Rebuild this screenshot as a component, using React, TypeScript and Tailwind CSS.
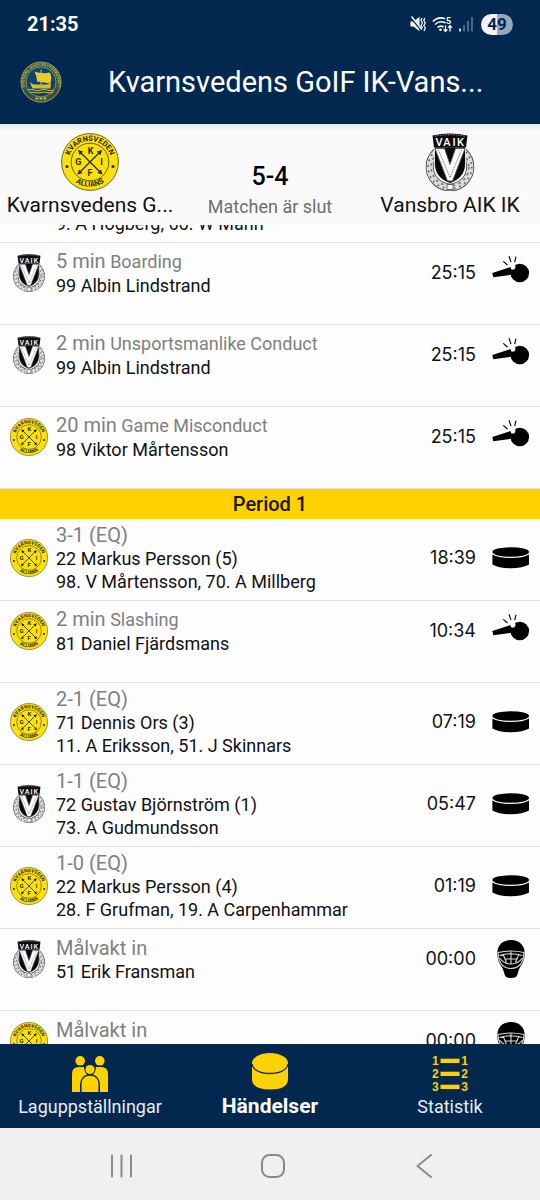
import { useId } from "react"

type Team = "kgif" | "vaik"
type EventKind = "penalty" | "goal" | "goalie"

type GameEvent = {
    team: Team
    kind: EventKind
    time: string
    title: string
    reason?: string
    player: string
    assists?: string
}

const period2: GameEvent[] = [
    { team: "kgif", kind: "goal", time: "28:41", title: "4-2 (EQ)", player: "22 Markus Persson (6)", assists: "9. A Högberg, 66. W Mann" },
    { team: "vaik", kind: "penalty", time: "25:15", title: "5 min", reason: "Boarding", player: "99 Albin Lindstrand" },
    { team: "vaik", kind: "penalty", time: "25:15", title: "2 min", reason: "Unsportsmanlike Conduct", player: "99 Albin Lindstrand" },
    { team: "kgif", kind: "penalty", time: "25:15", title: "20 min", reason: "Game Misconduct", player: "98 Viktor Mårtensson" },
]

const period1: GameEvent[] = [
    { team: "kgif", kind: "goal", time: "18:39", title: "3-1 (EQ)", player: "22 Markus Persson (5)", assists: "98. V Mårtensson, 70. A Millberg" },
    { team: "kgif", kind: "penalty", time: "10:34", title: "2 min", reason: "Slashing", player: "81 Daniel Fjärdsmans" },
    { team: "kgif", kind: "goal", time: "07:19", title: "2-1 (EQ)", player: "71 Dennis Ors (3)", assists: "11. A Eriksson, 51. J Skinnars" },
    { team: "vaik", kind: "goal", time: "05:47", title: "1-1 (EQ)", player: "72 Gustav Björnström (1)", assists: "73. A Gudmundsson" },
    { team: "kgif", kind: "goal", time: "01:19", title: "1-0 (EQ)", player: "22 Markus Persson (4)", assists: "28. F Grufman, 19. A Carpenhammar" },
    { team: "vaik", kind: "goalie", time: "00:00", title: "Målvakt in", player: "51 Erik Fransman" },
    { team: "kgif", kind: "goalie", time: "00:00", title: "Målvakt in", player: "" },
]

const KgifCrest = ({ className }: { className: string }) => {
    const id = useId()
    return (
        <svg viewBox="0 0 58 58" className={className} aria-hidden="true" fontFamily="Roboto, sans-serif" fontWeight="700" fill="#2b2a10">
            <circle cx="29" cy="29" r="28.4" fill="#fbe10c" stroke="#6d6620" strokeWidth="1" />
            <circle cx="29" cy="29" r="18.8" fill="none" stroke="#3a3812" strokeWidth="0.8" />
            <path id={`${id}t`} d="M8.4 33A21 21 0 1 1 49.6 33" fill="none" />
            <path id={`${id}b`} d="M8 43A26 26 0 0 0 50 43" fill="none" />
            <text fontSize="7.5"><textPath href={`#${id}t`} startOffset="50%" textAnchor="middle">KVARNSVEDEN</textPath></text>
            <text fontSize="7.5"><textPath href={`#${id}b`} startOffset="50%" textAnchor="middle">ALLIANS</textPath></text>
            <circle cx="6" cy="33.5" r="1.6" />
            <circle cx="52" cy="33.5" r="1.6" />
            <path d="M18.5 18.5L40 40M39.5 18.5L18 40" stroke="#2b2a10" strokeWidth="1.3" />
            <path d="M17 17l5.2 1.6-3.6 3.6zM41 17l-5.2 1.6 3.6 3.6zM16.5 41.5l1.6-5 3.4 3.4zM41.5 41.5l-1.6-5-3.4 3.4z" />
            <g fontSize="9" textAnchor="middle">
                <text x="29.5" y="20.6">K</text>
                <text x="17.4" y="32.2">G</text>
                <text x="40.6" y="32.2">I</text>
                <text x="29" y="43.4">F</text>
            </g>
        </svg>
    )
}

const VaikCrest = ({ className }: { className: string }) => (
    <svg viewBox="0 0 58 58" className={className} aria-hidden="true">
        <circle cx="29" cy="34" r="20.3" fill="none" stroke="#444" strokeWidth="8" />
        <circle cx="29" cy="34" r="20.3" fill="none" stroke="#dcdcdc" strokeWidth="6.4" />
        <circle cx="29" cy="34" r="21.8" fill="none" stroke="#555" strokeWidth="1.6" strokeDasharray="1.5 4.2" />
        <circle cx="29" cy="34" r="18.8" fill="none" stroke="#777" strokeWidth="1.6" strokeDasharray="2.6 3.4" />
        <path d="M26 51.5h6v5h-6z" fill="#fff" stroke="#444" strokeWidth="0.8" />
        <path d="M13.5 14H44.5V31C44.5 41 38 47 29 50.5C20 47 13.5 41 13.5 31Z" fill="#080808" stroke="#fff" strokeWidth="0.8" />
        <path d="M14 15.5H23.5L29 31.5L34.5 15.5H44L31.5 48H26.5Z" fill="#fff" stroke="#555" strokeWidth="0.9" />
        <path d="M17.5 17L29 44.5L40.5 17" fill="none" stroke="#777" strokeWidth="1" strokeDasharray="1.2 0.8" />
        <path d="M11.5 2.5Q29-1.5 46.5 2.5L45 14.5H13Z" fill="#0c0c0c" />
        <path d="M14 3.2Q29 0.2 44 3.2" fill="none" stroke="#aaa" strokeWidth="0.9" strokeDasharray="1.4 1.2" />
        <g fontFamily="Roboto, sans-serif" fontSize="11" fontWeight="500" textAnchor="middle" fill="#fff">
            <text x="18" y="13.4">V</text>
            <text x="26" y="13.4">A</text>
            <text x="33" y="13.4">I</text>
            <text x="39.5" y="13.4">K</text>
        </g>
    </svg>
)

const crests = { kgif: KgifCrest, vaik: VaikCrest }

const FederationLogo = () => {
    const id = useId()
    return (
        <svg viewBox="0 0 42 42" className="size-[42px]" aria-hidden="true">
            <circle cx="21" cy="21" r="20" fill="#34543f" stroke="#a8a24c" strokeWidth="1" />
            <circle cx="21" cy="21" r="15" fill="#0d4274" stroke="#a8a24c" strokeWidth="0.8" />
            <path id={id} d="M9.3 33.3A16.6 16.6 0 1 1 32.7 33.3" fill="none" />
            <text fontFamily="Roboto, sans-serif" fontSize="4" fontWeight="700" fill="#c2b850">
                <textPath href={`#${id}`} startOffset="50%" textAnchor="middle">SVENSKA ISHOCKEYFÖRBUNDET</textPath>
            </text>
            <path d="M14.5 10.5Q22 13.5 30 11.5Q32.5 17 30 22.5L17 20.5Q17 15 14.5 10.5Z" fill="#e9cc28" />
            <path d="M21 8.5V26" stroke="#e9cc28" strokeWidth="0.9" />
            <path d="M10 20.5Q11.500 23.500 15 23.500H26.500Q30 23 31 21L30.500 27.500H12.500Q10.500 24.500 10 20.500Z" fill="#d6bd2c" />
            <path d="M7.5 29Q11 27.5 14.5 29T21 29T27.500 29T34 29M9.500 31.500Q12 30.500 15 31.500T21 31.500T27 31.500T33 31.500" fill="none" stroke="#d9c02c" strokeWidth="1" />
            <path d="M15.500 37.500H26.500" stroke="#d9c02c" strokeWidth="2" strokeDasharray="2.6 1.4" />
        </svg>
    )
}

const WhistleIcon = () => (
    <svg viewBox="0 0 38 38" className="size-[38px]" aria-hidden="true">
        <circle cx="27.800" cy="19" r="9.300" />
        <path d="M0.300 18.900L18.500 13L22 20.500L1.300 23.200Z" />
        <path d="M18.300 12.500L19.600 15.700L22.600 15.200L23.600 12.400L22 9.500Z" fill="#fdfdfd" />
        <path d="M11.300 7.300L15.500 11M17 2.300L19 8M24 2.700L22.700 8" stroke="#000" strokeWidth="1.100" />
    </svg>
)

const PuckIcon = () => (
    <svg viewBox="0 0 38 38" className="size-[38px]" aria-hidden="true">
        <ellipse cx="18.700" cy="13" rx="18.300" ry="4.800" />
        <path d="M0.400 15.400Q6 18.900 18.700 18.900T37 15.400V25.600Q31 29.300 18.700 29.300T0.400 25.600Z" />
    </svg>
)

const MaskIcon = () => (
    <svg viewBox="0 0 38 38" className="size-[38px]" aria-hidden="true">
        <path d="M19 0C27.5 0 32.500 5.500 32.600 12.500C33 18.500 31 23 28.500 26.500C26.500 29.500 26 33 25 35.500Q24 38 19 38T13 35.500C12 33 11.500 29.500 9.500 26.500C7 23 5 18.500 5.400 12.500C5.500 5.500 10.500 0 19 0Z" />
        <g fill="none" stroke="#dcdcdc" strokeWidth="1.100">
            <path d="M6 12.500Q19 9.500 32 12.500Q31.500 28 19 28.500Q6.500 28 6 12.500Z" />
            <path d="M7.500 15.500Q19 12 30.500 15.500M7.500 18Q12 24 19 24T30.500 18M19 11.500V24M11 14L14.500 22.500M27 14L23.500 22.500M13 19H25" />
        </g>
    </svg>
)

const kindIcons = { penalty: WhistleIcon, goal: PuckIcon, goalie: MaskIcon }

const EventRow = ({ event }: { event: GameEvent }) => {
    const Crest = crests[event.team]
    const Icon = kindIcons[event.kind]
    return (
        <li className="h-[82px] border-b border-[#e2e2e4]">
            <div className={`flex items-center px-[10px] ${event.assists ? "h-[78px]" : "h-[60px]"}`}>
                <Crest className="size-[38px] shrink-0" />
                <div className="ml-2 min-w-0 flex-1 text-[18px] leading-[23px] text-[#111]">
                    <p className="truncate text-[20px] leading-6 text-[#808080]">
                        {event.title}
                        {event.reason && <span className="text-[18px]"> {event.reason}</span>}
                    </p>
                    <p className="min-h-[23px] truncate">{event.player}</p>
                    {event.assists && <p className="truncate">{event.assists}</p>}
                </div>
                <time className="mr-4 font-['Inter',sans-serif] text-[18px] leading-6 text-[#111]">{event.time}</time>
                <Icon />
            </div>
        </li>
    )
}

const StatusBar = () => (
    <div className="flex h-12 items-center justify-between px-[27px]">
        <span className="text-[20px] font-bold leading-6">21:35</span>
        <div className="flex items-center gap-[6px]">
            <svg viewBox="0 0 16 16" className="size-4" fill="#fff" aria-hidden="true">
                <path d="M0.500 5.500H3.500L9.500 0.800V15.200L3.500 10.500H0.500Z" />
                <path d="M0.500 0.500L12 14.500" stroke="#022850" strokeWidth="2.600" />
                <path d="M1.500 0.500L12 13.500" stroke="#fff" strokeWidth="1.400" />
                <path d="M12 2L11 4.500L12.500 7L11 9.500L12.500 12M14.800 2L13.800 4.500L15.300 7L13.800 9.500L15.300 12L14 15" fill="none" stroke="#fff" strokeWidth="1.200" />
            </svg>
            <svg viewBox="0 0 21 17" className="h-[17px] w-[21px]" aria-hidden="true">
                <g fill="none" stroke="#fff" strokeWidth="1.600">
                    <path d="M0.800 5.500Q6.500 0 13 2.800M3 8.500Q8 4 13.500 7M5.500 11.500Q8.500 9 11.500 11" />
                    <path d="M13.500 9.500V15M11.600 13.300L13.500 15.500L15.400 13.300M18 15.500V10M16.100 11.800L18 9.600L19.900 11.800" strokeWidth="1.300" />
                </g>
                <circle cx="8.500" cy="13.800" r="1.300" fill="#fff" />
                <text x="14" y="7.600" fontFamily="Roboto, sans-serif" fontSize="9" fontWeight="700" fill="#fff">5</text>
            </svg>
            <svg viewBox="0 0 14 16" className="h-4 w-[14px]" aria-hidden="true">
                <path d="M1 12.500V15.500" stroke="#fff" strokeWidth="1.600" />
                <path d="M5 9V15.500M9 5V15.500M13 1V15.500" stroke="#5f7896" strokeWidth="1.600" />
            </svg>
            <span className="ml-[2px] flex h-[21px] w-8 items-center justify-center rounded-full bg-linear-to-r from-[#f1f4f9] from-50% to-[#96a6bb] to-50% text-[17px] font-bold leading-5 text-[#022850]">49</span>
        </div>
    </div>
)

const TeamColumn = ({ team, name }: { team: Team; name: string }) => {
    const Crest = crests[team]
    return (
        <div className="flex min-w-0 flex-col items-center px-1 pt-[9px]">
            <Crest className="size-[58px]" />
            <h2 className="mt-px w-full truncate text-center text-[21px] leading-[26px] text-[#111]">{name}</h2>
        </div>
    )
}

const BottomTabs = () => (
    <nav className="grid h-[84px] shrink-0 grid-cols-3 bg-[#022850] text-[#e9eef5]">
        <button type="button" className="flex flex-col items-center pt-3">
            <svg viewBox="0 0 36 36" className="size-9" fill="#ffd200" aria-hidden="true">
                <circle cx="8.200" cy="4.800" r="4.800" />
                <circle cx="27.800" cy="4.800" r="4.800" />
                <path d="M0 36V18Q0 11 7 11H12Q12.500 16.500 15 18.500Q8 21 8 29V36Z" />
                <path d="M36 36V18Q36 11 29 11H24Q23.500 16.500 21 18.500Q28 21 28 29V36Z" />
                <circle cx="18" cy="13.500" r="4.600" />
                <path d="M9.600 36V28.500Q9.600 19.800 18 19.800T26.400 28.500V36Z" />
            </svg>
            <span className="mt-1 text-[18px] leading-[22px]">Laguppställningar</span>
        </button>
        <button type="button" aria-current="page" className="flex flex-col items-center pt-2 text-white">
            <svg viewBox="0 0 36 38" className="h-[38px] w-9" fill="#ffd200" aria-hidden="true">
                <path d="M0 11V28Q1 37.500 18 37.500T36 28V11Z" />
                <ellipse cx="18" cy="11" rx="18" ry="10" />
                <path d="M0 12C1 18 8 21.500 18 21.500S35 18 36 12" fill="none" stroke="#022850" strokeWidth="1.300" />
            </svg>
            <span className="mt-1 text-[21px] font-bold leading-6">Händelser</span>
        </button>
        <button type="button" className="flex flex-col items-center pt-3">
            <svg viewBox="0 0 36 36" className="size-9" fill="#ffd200" fontFamily="Liberation Sans, sans-serif" fontSize="12" fontWeight="700" aria-hidden="true">
                {[5, 18, 31].map((y, i) => (
                    <g key={y}>
                        <text x="0" y={y + 4}>{i + 1}</text>
                        <rect x="8.500" y={y - 2.3} width="19" height="4.300" />
                        <text x="29.300" y={y + 4}>{i + 1}</text>
                    </g>
                ))}
            </svg>
            <span className="mt-1 text-[18px] leading-[22px]">Statistik</span>
        </button>
    </nav>
)

const SystemNav = () => (
    <div className="flex h-[72px] shrink-0 items-center justify-center gap-32 bg-[#f0f0f3] pl-[6px] pt-1">
        <button type="button" aria-label="Senaste appar">
            <svg viewBox="0 0 24 24" className="size-6" aria-hidden="true">
                <path d="M3 1.500V22.500M12.500 1.500V22.500M22 1.500V22.500" stroke="#8a8a8d" strokeWidth="2" strokeLinecap="round" />
            </svg>
        </button>
        <button type="button" aria-label="Hem">
            <svg viewBox="0 0 24 24" className="size-6" aria-hidden="true">
                <rect x="1" y="1" width="22" height="22" rx="7.500" fill="none" stroke="#8a8a8d" strokeWidth="2" />
            </svg>
        </button>
        <button type="button" aria-label="Tillbaka">
            <svg viewBox="0 0 24 24" className="size-6" aria-hidden="true">
                <path d="M18 1L4.500 12L18 23" fill="none" stroke="#8a8a8d" strokeWidth="2" strokeLinecap="round" strokeLinejoin="round" />
            </svg>
        </button>
    </div>
)

const App = () => {
    return (
        <div className="flex h-screen flex-col overflow-hidden bg-[#fdfdfd] font-['Roboto',sans-serif]">
            <header className="shrink-0 bg-[#022850] text-white">
                <StatusBar />
                <div className="flex h-[76px] items-start pl-5 pr-9 pt-[13px]">
                    <FederationLogo />
                    <h1 className="ml-[46px] min-w-0 flex-1 truncate text-[29px] leading-[42px]">Kvarnsvedens GoIF IK-Vans...</h1>
                </div>
            </header>

            <section className="grid h-[101px] shrink-0 grid-cols-3 bg-[#fafafa] bg-linear-to-b from-[#e8e9ec] to-[#fafafa] to-8%">
                <TeamColumn team="kgif" name="Kvarnsvedens G..." />
                <div className="flex flex-col items-center pt-[39px]">
                    <p className="text-[25px] font-medium leading-7 text-black">5-4</p>
                    <p className="mt-[3px] text-[18px] leading-[26px] text-[#6e6e6e]">Matchen är slut</p>
                </div>
                <TeamColumn team="vaik" name="Vansbro AIK IK" />
            </section>

            <main className="min-h-0 flex-1 overflow-hidden">
                <ul className="-mt-16">
                    {period2.map((event, i) => <EventRow key={i} event={event} />)}
                </ul>
                <h3 className="bg-[#ffd200] text-center text-[20px] font-medium leading-[30px] text-[#1a1400]">Period 1</h3>
                <ul>
                    {period1.map((event, i) => <EventRow key={i} event={event} />)}
                </ul>
            </main>

            <BottomTabs />
            <SystemNav />
        </div>
    )
}

export default App
